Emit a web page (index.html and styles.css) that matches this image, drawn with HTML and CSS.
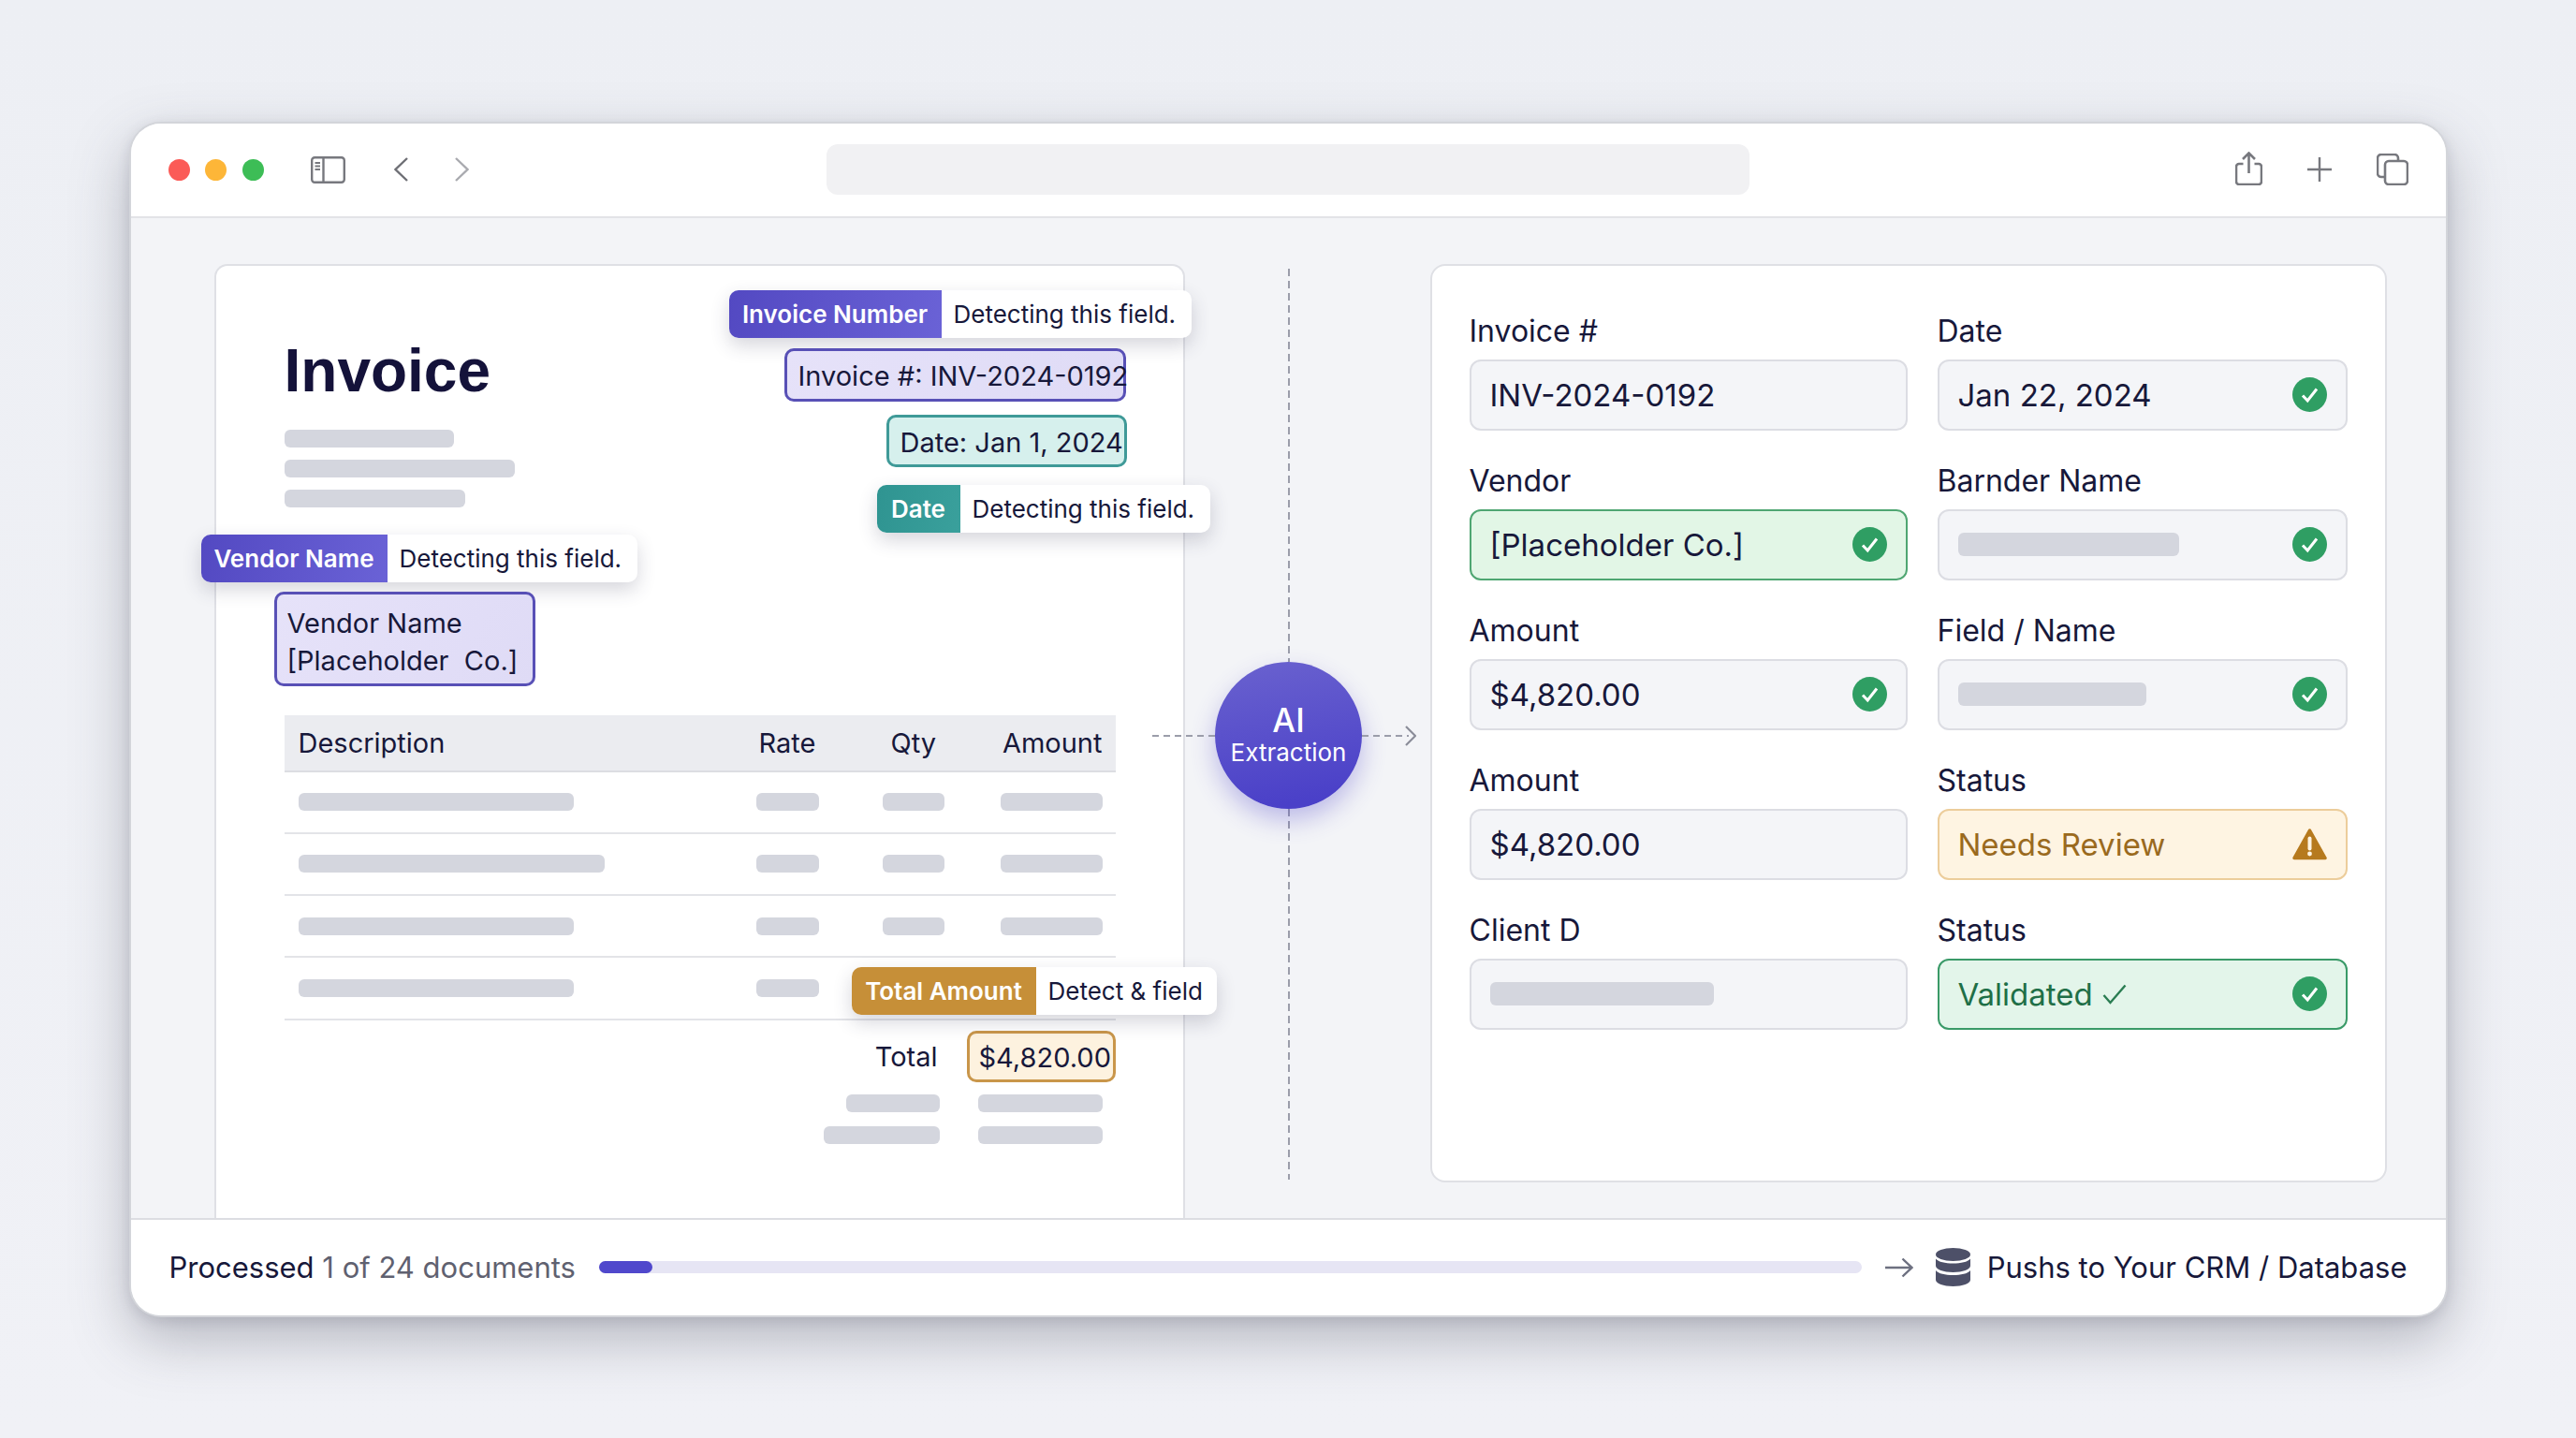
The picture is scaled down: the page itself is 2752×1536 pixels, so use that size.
FILE: index.html

```html
<!DOCTYPE html>
<html lang="en">
<head>
    <meta charset="UTF-8">
    <title>Invoice Extraction</title>
    <link rel="stylesheet" href="styles.css">
</head>
<body>
    <div class="window">
        <!-- Browser toolbar -->
        <header class="toolbar">
            <div class="toolbar-left">
                <div class="lights">
                    <span class="light red"></span>
                    <span class="light yellow"></span>
                    <span class="light green"></span>
                </div>
                <svg class="icon-sidebar" viewBox="0 0 37 29" fill="none" stroke="#77787e" stroke-width="2.4">
                    <rect x="1.2" y="1.2" width="34.6" height="26.6" rx="3"/>
                    <path d="M13.5 1.2v26.6"/>
                    <path d="M4.5 7h5.5M4.5 10.5h5.5M4.5 14h5.5" stroke-width="1.8"/>
                </svg>
                <svg class="icon-chevron" viewBox="0 0 15 26" fill="none" stroke="#6e6f75" stroke-width="2.4">
                    <path d="M14 1L1.5 13 14 25"/>
                </svg>
                <svg class="icon-chevron" viewBox="0 0 15 26" fill="none" stroke="#a9aaaf" stroke-width="2.4">
                    <path d="M1 1l12.5 12L1 25"/>
                </svg>
            </div>
            <div class="url-bar"></div>
            <div class="toolbar-right">
                <svg class="icon-share" viewBox="0 0 29 36" fill="none" stroke="#77787e" stroke-width="2.6">
                    <path d="M8.5 13H4a3 3 0 0 0-3 3v16a3 3 0 0 0 3 3h21a3 3 0 0 0 3-3V16a3 3 0 0 0-3-3h-4.5"/>
                    <path d="M14.5 23V2M8 8l6.5-6.5L21 8"/>
                </svg>
                <svg class="icon-plus" viewBox="0 0 26 26" fill="none" stroke="#77787e" stroke-width="2.4">
                    <path d="M13 0v26M0 13h26"/>
                </svg>
                <svg class="icon-tabs" viewBox="0 0 34 34" fill="none" stroke="#77787e" stroke-width="2.6">
                    <path d="M8 25H5a4 4 0 0 1-4-4V5a4 4 0 0 1 4-4h14a4 4 0 0 1 4 4v3"/>
                    <rect x="9" y="8" width="24" height="25" rx="4"/>
                </svg>
            </div>
        </header>

        <main class="workspace">
            <!-- Invoice document -->
            <section class="doc">
                <h1 class="doc-title">Invoice</h1>
                <div class="skel-stack">
                    <div class="skel w-181"></div>
                    <div class="skel w-246"></div>
                    <div class="skel w-193"></div>
                </div>

                <div class="table">
                    <div class="table-row table-head">
                        <span>Description</span>
                        <span class="head-rate">Rate</span>
                        <span class="head-qty">Qty</span>
                        <span class="head-amount">Amount</span>
                    </div>
                    <div class="table-row">
                        <div class="skel w-294"></div>
                        <div class="skel w-67"></div>
                        <div class="skel w-66"></div>
                        <div class="skel w-109"></div>
                    </div>
                    <div class="table-row">
                        <div class="skel w-327"></div>
                        <div class="skel w-67"></div>
                        <div class="skel w-66"></div>
                        <div class="skel w-109"></div>
                    </div>
                    <div class="table-row">
                        <div class="skel w-294"></div>
                        <div class="skel w-67"></div>
                        <div class="skel w-66"></div>
                        <div class="skel w-109"></div>
                    </div>
                    <div class="table-row">
                        <div class="skel w-294"></div>
                        <div class="skel w-67"></div>
                        <div class="skel w-66"></div>
                        <div class="skel w-109"></div>
                    </div>
                </div>

                <div class="total-row">
                    <span>Total</span>
                    <span class="hl hl-amber hl-total">$4,820.00</span>
                </div>
                <div class="total-skel">
                    <div class="skel w-100"></div>
                    <div class="skel w-133"></div>
                </div>
                <div class="total-skel">
                    <div class="skel w-124"></div>
                    <div class="skel w-133"></div>
                </div>

                <!-- Detection overlays -->
                <div class="tag tag-invoice"><span class="tag-key key-violet">Invoice Number</span><span class="tag-text">Detecting this field.</span></div>
                <div class="hl hl-violet hl-invoice">Invoice #: INV-2024-0192</div>
                <div class="hl hl-teal hl-date">Date: Jan 1, 2024</div>
                <div class="tag tag-date"><span class="tag-key key-teal">Date</span><span class="tag-text">Detecting this field.</span></div>
                <div class="tag tag-vendor"><span class="tag-key key-violet">Vendor Name</span><span class="tag-text">Detecting this field.</span></div>
                <div class="hl hl-violet hl-vendor">Vendor Name<br>[Placeholder&nbsp; Co.]</div>
                <div class="tag tag-total"><span class="tag-key key-amber">Total Amount</span><span class="tag-text">Detect &amp; field</span></div>
            </section>

            <!-- Connector -->
            <div class="flow">
                <div class="flow-line line-top"></div>
                <div class="ai-badge">
                    <span class="ai-title">AI</span>
                    <span class="ai-sub">Extraction</span>
                    <div class="dash dash-left"></div>
                    <div class="dash dash-right"></div>
                    <svg class="dash-arrow" viewBox="0 0 12 22" fill="none" stroke="#8b8d99" stroke-width="2.2">
                        <path d="M1 1l10 10L1 21"/>
                    </svg>
                </div>
                <div class="flow-line line-bottom"></div>
            </div>

            <!-- Extracted fields -->
            <section class="panel">
                <div class="field">
                    <label>Invoice #</label>
                    <div class="input"><span>INV-2024-0192</span></div>
                </div>
                <div class="field">
                    <label>Date</label>
                    <div class="input"><span>Jan 22, 2024</span>
                        <svg class="check" viewBox="0 0 37 37"><circle cx="18.5" cy="18.5" r="18.5"/><path d="M11 19.5l5.2 5.5L26 12.5"/></svg>
                    </div>
                </div>
                <div class="field">
                    <label>Vendor</label>
                    <div class="input input-green"><span>[Placeholder Co.]</span>
                        <svg class="check" viewBox="0 0 37 37"><circle cx="18.5" cy="18.5" r="18.5"/><path d="M11 19.5l5.2 5.5L26 12.5"/></svg>
                    </div>
                </div>
                <div class="field">
                    <label>Barnder Name</label>
                    <div class="input"><div class="skel skel-field w-236"></div>
                        <svg class="check" viewBox="0 0 37 37"><circle cx="18.5" cy="18.5" r="18.5"/><path d="M11 19.5l5.2 5.5L26 12.5"/></svg>
                    </div>
                </div>
                <div class="field">
                    <label>Amount</label>
                    <div class="input"><span>$4,820.00</span>
                        <svg class="check" viewBox="0 0 37 37"><circle cx="18.5" cy="18.5" r="18.5"/><path d="M11 19.5l5.2 5.5L26 12.5"/></svg>
                    </div>
                </div>
                <div class="field">
                    <label>Field / Name</label>
                    <div class="input"><div class="skel skel-field w-201"></div>
                        <svg class="check" viewBox="0 0 37 37"><circle cx="18.5" cy="18.5" r="18.5"/><path d="M11 19.5l5.2 5.5L26 12.5"/></svg>
                    </div>
                </div>
                <div class="field">
                    <label>Amount</label>
                    <div class="input"><span>$4,820.00</span></div>
                </div>
                <div class="field">
                    <label>Status</label>
                    <div class="input input-warn"><span>Needs Review</span>
                        <svg class="warn" viewBox="0 0 37 34"><path d="M18.5 2L35 31.5H2z" fill="#b67a1e" stroke="#b67a1e" stroke-width="3.5" stroke-linejoin="round"/><path d="M18.5 10.5v11" stroke="#fef4e2" stroke-width="4" stroke-linecap="round"/><circle cx="18.5" cy="27" r="2.4" fill="#fef4e2"/></svg>
                    </div>
                </div>
                <div class="field">
                    <label>Client D</label>
                    <div class="input"><div class="skel skel-field w-239"></div></div>
                </div>
                <div class="field">
                    <label>Status</label>
                    <div class="input input-valid"><span class="valid-text">Validated
                        <svg class="tick" viewBox="0 0 26 22" fill="none" stroke="#2a7d52" stroke-width="2.4"><path d="M1.5 12l7 8L24.5 1.5"/></svg></span>
                        <svg class="check" viewBox="0 0 37 37"><circle cx="18.5" cy="18.5" r="18.5"/><path d="M11 19.5l5.2 5.5L26 12.5"/></svg>
                    </div>
                </div>
            </section>
        </main>

        <!-- Progress footer -->
        <footer class="statusbar">
            <span class="status-text">Processed <span class="muted">1 of 24 documents</span></span>
            <div class="progress"><div class="progress-fill"></div></div>
            <svg class="icon-arrow" viewBox="0 0 30 22" fill="none" stroke="#6d7080" stroke-width="2.4">
                <path d="M0 11h28M18.5 1.5L28.5 11l-10 9.5"/>
            </svg>
            <svg class="icon-db" viewBox="0 0 37 41" fill="#4d5068">
                <ellipse cx="18.5" cy="7" rx="18.5" ry="7"/>
                <path d="M0 11.5c3 3.6 10 5 18.500 5s15.500-1.400 18.500-5V19c0 3.900-8.300 7-18.500 7S0 22.900 0 19z"/>
                <path d="M0 24c3 3.600 10 5 18.500 5s15.500-1.400 18.500-5v10c0 3.900-8.300 7-18.500 7S0 37.900 0 34z"/>
            </svg>
            <span class="status-text crm">Pushs to Your CRM / Database</span>
        </footer>
    </div>
</body>
</html>
```

FILE: styles.css

```css
/* Reset and base styles */
* {
    box-sizing: border-box;
    margin: 0;
    padding: 0;
}

html, body {
    height: 100%;
}

body {
    display: flex;
    justify-content: center;
    align-items: center;
    overflow: hidden;
    background: linear-gradient(180deg, #edeff4 0%, #f0f1f6 100%);
    font-family: Inter, "Liberation Sans", sans-serif;
    color: #17183a;
}

/* Browser window */
.window {
    width: 2477px;
    height: 1277px;
    display: flex;
    flex-direction: column;
    background: #f3f4f7;
    border: 2px solid #d3d5da;
    border-radius: 34px;
    box-shadow: 0 24px 60px rgba(70, 72, 90, 0.34), 0 4px 14px rgba(70, 72, 90, 0.14);
    overflow: hidden;
}

.toolbar {
    height: 101px;
    flex-shrink: 0;
    display: grid;
    grid-template-columns: 1fr 986px 1fr;
    align-items: center;
    padding: 0 40px;
    background: #fff;
    border-bottom: 2px solid #e2e3e7;
}

.toolbar-left {
    display: flex;
    align-items: center;
}

.lights {
    display: flex;
    gap: 16.5px;
    margin-right: 50px;
}

.light {
    width: 23px;
    height: 23px;
    border-radius: 50%;
}

.red { background: #fb5b57; }
.yellow { background: #fdb638; }
.green { background: #3dbd56; }

.icon-sidebar {
    width: 37px;
    height: 29px;
    margin-right: 52px;
}

.icon-chevron {
    width: 15px;
    height: 26px;
    margin-right: 50px;
}

.url-bar {
    height: 54px;
    background: #f1f1f3;
    border-radius: 12px;
}

.toolbar-right {
    display: flex;
    justify-content: flex-end;
    align-items: center;
    gap: 48px;
}

.icon-share { width: 29px; height: 36px; margin-top: -2px; }
.icon-plus { width: 26px; height: 26px; }
.icon-tabs { width: 34px; height: 34px; }

/* Main area */
.workspace {
    flex: 1;
    min-height: 0;
    display: flex;
    padding: 49px 63px 0 89px;
}

.skel {
    height: 19px;
    background: #d4d6de;
    border-radius: 6px;
}

.w-66 { width: 66px; }
.w-67 { width: 67px; }
.w-100 { width: 100px; }
.w-109 { width: 109px; }
.w-124 { width: 124px; }
.w-133 { width: 133px; }
.w-181 { width: 181px; }
.w-193 { width: 193px; }
.w-201 { width: 201px; }
.w-236 { width: 236px; }
.w-239 { width: 239px; }
.w-246 { width: 246px; }
.w-294 { width: 294px; }
.w-327 { width: 327px; }

/* Invoice document */
.doc {
    position: relative;
    z-index: 2;
    width: 1037px;
    flex-shrink: 0;
    padding: 0 72px 0 73px;
    background: #fff;
    border: 2px solid #dfe0e5;
    border-bottom: none;
    border-radius: 14px 14px 0 0;
}

.doc-title {
    margin-top: 76px;
    font-family: "Liberation Sans", Arial, sans-serif;
    font-size: 64px;
    font-weight: 700;
    line-height: 72px;
    color: #14123a;
}

.skel-stack {
    display: flex;
    flex-direction: column;
    gap: 13px;
    margin-top: 27px;
}

.table {
    margin-top: 222px;
    font-size: 29px;
}

.table-row {
    height: 66.25px;
    display: grid;
    grid-template-columns: 489px 135px 126px 109px;
    align-items: center;
    padding-left: 15px;
    border-bottom: 2px solid #e3e4e8;
}

.table-head {
    height: 61px;
    background: #ebecf0;
    border-bottom-color: #dcdde2;
}

.head-rate { padding-left: 3px; }
.head-qty { padding-left: 9px; }
.head-amount { text-align: right; white-space: nowrap; }

.total-row {
    display: flex;
    justify-content: flex-end;
    align-items: center;
    gap: 31px;
    margin-top: 11px;
    font-size: 29px;
}

.total-skel {
    display: flex;
    justify-content: flex-end;
    gap: 41px;
    padding-right: 14px;
    margin-top: 15px;
}

.total-row + .total-skel {
    margin-top: 13px;
}

/* Highlight boxes and tags sit on top of the document */
.hl {
    font-size: 29px;
    line-height: 1;
    border: 3px solid;
    border-radius: 10px;
    white-space: nowrap;
}

.hl-violet {
    position: absolute;
    background: linear-gradient(120deg, #e6e2f9, #dfdbf6);
    border-color: #5850b6;
}

.hl-teal {
    position: absolute;
    background: #d6f0ed;
    border-color: #3f9a98;
}

.hl-amber {
    background: #fdf2df;
    border-color: #c9964a;
}

.hl-invoice {
    left: 607px;
    top: 88px;
    width: 365px;
    height: 57px;
    padding: 12px 0 0 12px;
}

.hl-date {
    left: 716px;
    top: 159px;
    width: 257px;
    height: 56px;
    padding: 12px 0 0 12px;
}

.hl-vendor {
    left: 62px;
    top: 348px;
    width: 279px;
    height: 101px;
    padding: 11px 0 0 11px;
    line-height: 40px;
}

.hl-total {
    width: 159px;
    height: 55px;
    padding: 11px 0 0 10px;
}

.tag {
    position: absolute;
    height: 51px;
    display: flex;
    align-items: stretch;
    background: #fff;
    border-radius: 10px;
    font-size: 26px;
    white-space: nowrap;
    box-shadow: 0 8px 20px rgba(50, 50, 80, 0.2);
}

.tag-key {
    display: flex;
    align-items: center;
    justify-content: center;
    font-weight: 600;
    color: #fff;
    border-radius: 10px 0 0 10px;
}

.tag-text {
    flex: 1;
    display: flex;
    align-items: center;
    padding-left: 13px;
}

.key-violet { background: linear-gradient(100deg, #5349c2, #6a62d6); }
.key-teal { background: linear-gradient(100deg, #2f9491, #3aa09c); }
.key-amber { background: #c68f38; }

.tag-invoice { left: 548px; top: 26px; width: 494px; }
.tag-invoice .tag-key { width: 227px; }

.tag-date { left: 706px; top: 234px; width: 356px; }
.tag-date .tag-key { width: 89px; }

.tag-vendor { left: -16px; top: 287px; width: 466px; }
.tag-vendor .tag-key { width: 199px; }

.tag-total { left: 679px; top: 749px; width: 390px; }
.tag-total .tag-key { width: 197px; }

/* Connector with the AI badge */
.flow {
    position: relative;
    z-index: 3;
    width: 222px;
    flex-shrink: 0;
    display: flex;
    flex-direction: column;
    align-items: center;
    padding: 5px 0 41px;
    margin-right: 40px;
}

.flow-line {
    width: 2px;
    background: repeating-linear-gradient(180deg, #9b9daa 0 8px, transparent 8px 13px);
}

.line-top { height: 420px; }
.line-bottom { flex: 1; }

.ai-badge {
    position: relative;
    width: 157px;
    height: 157px;
    flex-shrink: 0;
    display: flex;
    flex-direction: column;
    align-items: center;
    justify-content: center;
    color: #fff;
    border-radius: 50%;
    background: linear-gradient(170deg, #6a62cf 0%, #4a40c8 90%);
    box-shadow: 0 12px 26px rgba(74, 64, 200, 0.32);
}

.ai-title {
    font-size: 35px;
    font-weight: 500;
    line-height: 38px;
}

.ai-sub {
    font-size: 26px;
    line-height: 32px;
}

.dash {
    position: absolute;
    top: 78px;
    height: 2px;
    background: repeating-linear-gradient(90deg, #9b9daa 0 7px, transparent 7px 12px);
}

.dash-left { right: 100%; width: 67px; }
.dash-right { left: 100%; width: 50px; }

.dash-arrow {
    position: absolute;
    top: 68px;
    left: calc(100% + 46px);
    width: 12px;
    height: 22px;
}

/* Extracted fields panel */
.panel {
    width: 1022px;
    flex-shrink: 0;
    margin-bottom: 38px;
    padding: 50px 40px 0;
    display: grid;
    grid-template-columns: 468px 438px;
    grid-auto-rows: 126px;
    column-gap: 32px;
    row-gap: 34px;
    background: #fff;
    border: 2px solid #dfe0e5;
    border-radius: 16px;
}

.field label {
    display: block;
    height: 50px;
    font-size: 32px;
    line-height: 40px;
}

.input {
    height: 76px;
    display: flex;
    align-items: center;
    justify-content: space-between;
    padding: 0 20px;
    font-size: 33px;
    background: #f4f5f8;
    border: 2px solid #dcdde3;
    border-radius: 12px;
}

.input-green {
    background: #e2f6e6;
    border-color: #4fa672;
}

.input-warn {
    background: #fef4e2;
    border-color: #eccd9b;
    color: #9a6a1e;
}

.input-valid {
    background: #e3f5ea;
    border-color: #3a9a68;
    color: #1f6f47;
}

.skel-field {
    height: 25px;
}

.check {
    width: 37px;
    height: 37px;
    flex-shrink: 0;
    fill: #2f9e63;
}

.check path {
    fill: none;
    stroke: #fff;
    stroke-width: 3;
}

.warn {
    width: 37px;
    height: 34px;
    flex-shrink: 0;
}

.valid-text {
    display: flex;
    align-items: center;
    gap: 10px;
}

.tick {
    width: 26px;
    height: 22px;
}

/* Status bar */
.statusbar {
    height: 104px;
    flex-shrink: 0;
    display: flex;
    align-items: center;
    padding: 0 41px;
    font-size: 31px;
    background: #fff;
    border-top: 2px solid #dcdde2;
}

.status-text {
    white-space: nowrap;
}

.muted {
    color: #5f6170;
}

.progress {
    flex: 1;
    height: 13px;
    margin: 0 25px;
    background: #e6e5f4;
    border-radius: 7px;
}

.progress-fill {
    width: 57px;
    height: 100%;
    background: #5048cc;
    border-radius: 7px;
}

.icon-arrow {
    width: 30px;
    height: 22px;
    margin-right: 24px;
}

.icon-db {
    width: 37px;
    height: 41px;
    margin-right: 18px;
}
</style>
```
